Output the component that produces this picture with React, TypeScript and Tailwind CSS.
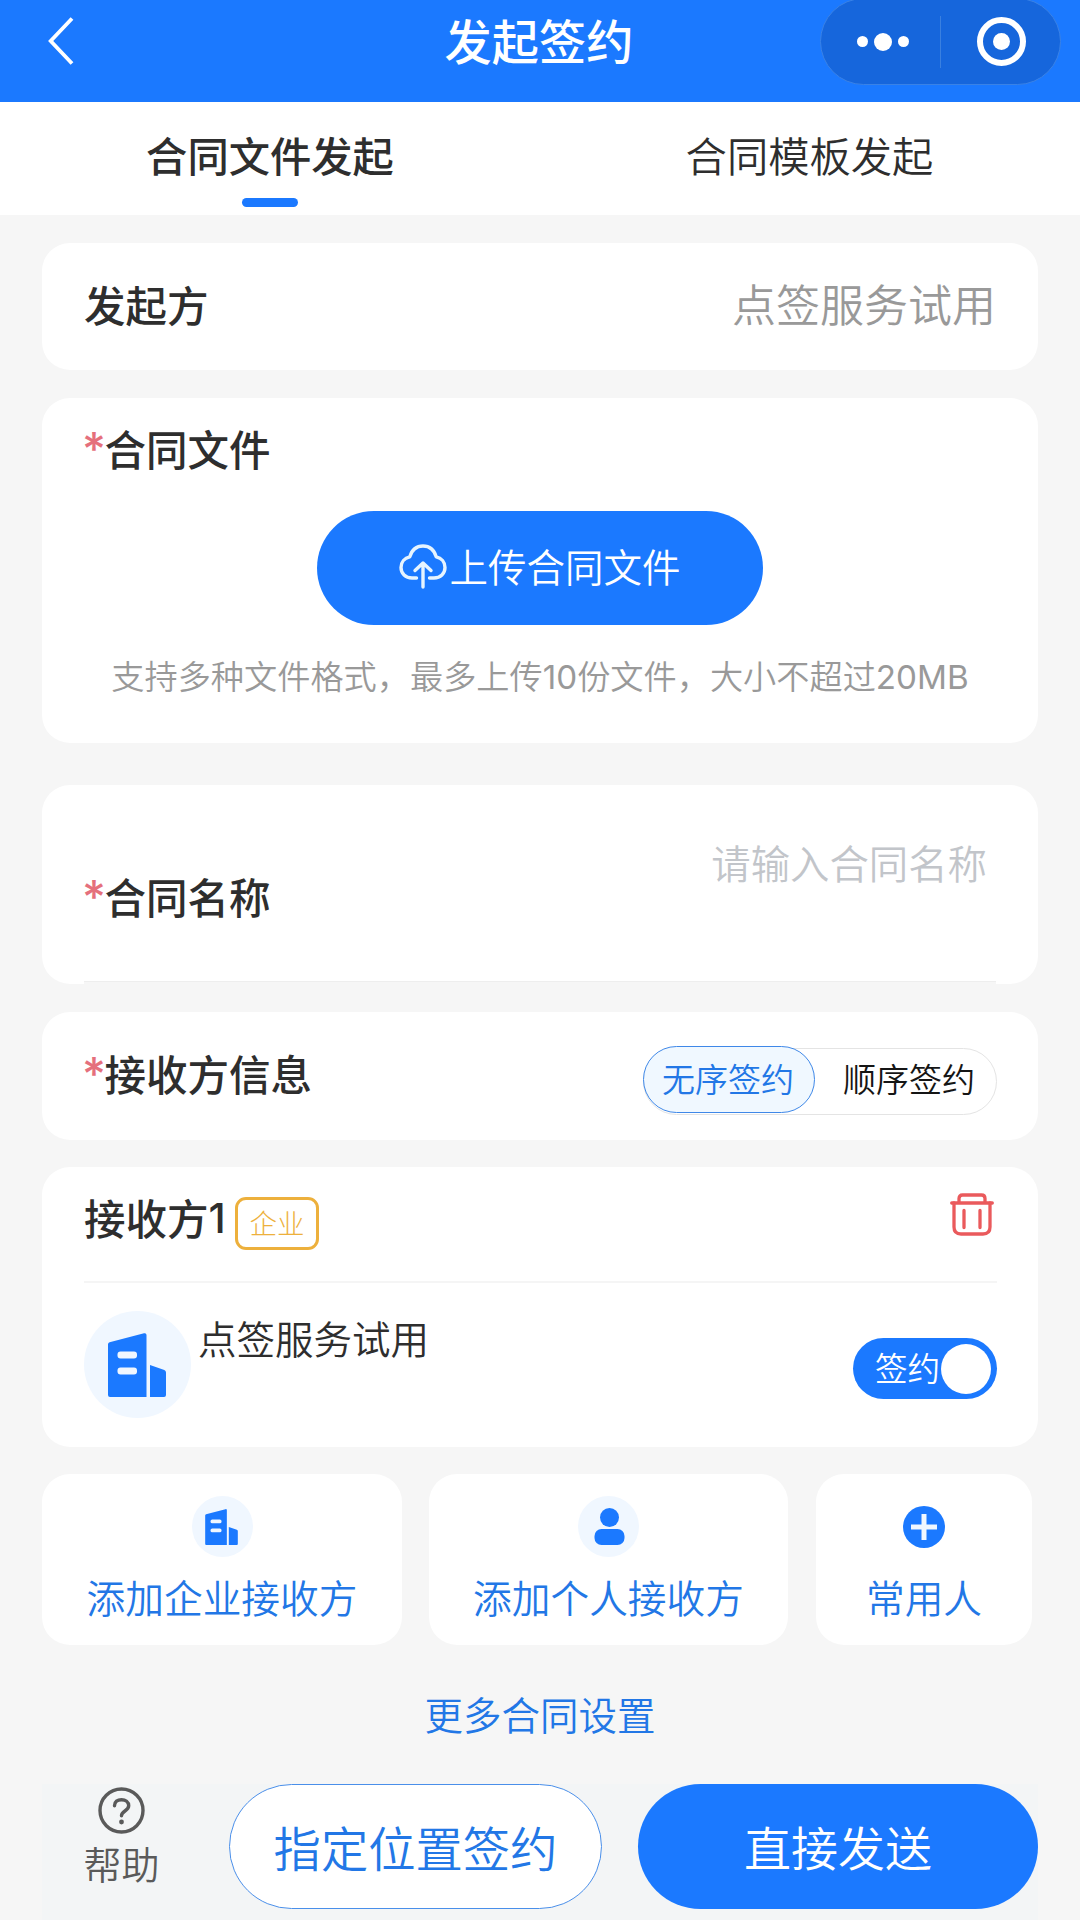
import React from "react";

function BackIcon() {
  return (
    <svg className="h-12 w-[26px]" viewBox="0 0 26 48" fill="none" stroke="#fff" strokeWidth="3.8">
      <path d="M24 1.5 2.700 24 24 46.500" />
    </svg>
  );
}

function CloudUploadIcon() {
  return (
    <svg className="h-[46px] w-12" viewBox="0 0 48 46" fill="none" stroke="#e6f4ff" strokeWidth="3.4" strokeLinecap="round" strokeLinejoin="round">
      <path d="M17.500 35H13C6.500 35 2 30.500 2 24.500c0-5.500 3.600-9.600 8.800-10.700C12.800 7 17.800 3 24 3s11.200 4 13.200 10.800C42.400 14.900 46 19 46 24.500c0 6-4.500 10.500-11 10.500h-4.500" />
      <path d="M24 44V20M16 27.500l8-7.500 8 7.500" />
    </svg>
  );
}

function BuildingIcon({ className }: { className: string }) {
  return (
    <svg className={className} viewBox="0 0 58 64">
      <path fill="#1b79ff" d="M0 11.500Q0 9.700 1.600 9.200L36 .3Q38.500-.2 38.500 2v62H2q-2 0-2-2zM42 32l14.300 5Q58 37.600 58 39.500V62q0 2-2 2H42z" />
      <rect x="9.500" y="18.500" width="19.500" height="7" rx="3" fill="#f0f7ff" />
      <rect x="9.500" y="34.500" width="19.500" height="7" rx="3" fill="#f0f7ff" />
    </svg>
  );
}

function PersonIcon() {
  return (
    <svg className="h-[37px] w-[31px]" viewBox="0 0 31 37" fill="#1b79ff">
      <circle cx="15.500" cy="9.500" r="9.500" />
      <rect x="0.500" y="21" width="30" height="16" rx="7" />
    </svg>
  );
}

function PlusIcon() {
  return (
    <svg className="size-[42px]" viewBox="0 0 42 42">
      <circle cx="21" cy="21" r="21" fill="#1b79ff" />
      <path d="M21 8v26M8 21h26" stroke="#f0f7ff" strokeWidth="5" />
    </svg>
  );
}

function TrashIcon() {
  return (
    <svg className="h-[43px] w-11" viewBox="0 0 44 43" fill="none" stroke="#ea5a5c" strokeWidth="3.3" strokeLinecap="round">
      <path d="M1.700 10h40.600M9 9.500V5.500Q9 2 12.500 2h19Q35 2 35 5.500v4" />
      <path d="M4 10v24q0 7 7 7h22q7 0 7-7V10M14 17.500v17M30 17.500v17" />
    </svg>
  );
}

function HelpIcon() {
  return (
    <svg className="size-[47px]" viewBox="0 0 47 47" fill="none" stroke="#5a5a5a" strokeWidth="3.400">
      <circle cx="23.500" cy="23.500" r="21.500" />
      <path d="M16.500 18.700c0-4 3-6 7-6s7.200 2.300 7.200 6c0 5.200-7.200 5.300-7.200 10" strokeLinecap="round" />
      <circle cx="23.500" cy="35" r="2.400" fill="#5a5a5a" stroke="none" />
    </svg>
  );
}

function Label({ children, required = false }: { children: React.ReactNode; required?: boolean }) {
  return (
    <div className="flex h-[60px] items-center text-[41.500px] leading-[60px] font-medium text-[#2e2e2e]">
      {required && <span className="-ml-[2px] h-[60px] w-[22.500px] pt-[1px] font-['Inter',sans-serif] text-[46px] text-[#e5707c]">*</span>}
      {children}
    </div>
  );
}

function Latin({ children }: { children: React.ReactNode }) {
  return <span className="font-['Inter',sans-serif] leading-none font-normal">{children}</span>;
}

function AddCard({ label, width, children }: { label: string; width: string; children: React.ReactNode }) {
  return (
    <button className={`flex h-[171px] flex-col items-center rounded-[28px] bg-white pt-[22px] ${width}`}>
      <span className="flex h-[61px] items-center">{children}</span>
      <span className="mt-[11px] text-[38.700px] leading-[56px] text-[#2277e6]">{label}</span>
    </button>
  );
}

export default function App() {
  return (
    <div className="flex h-[1920px] w-[1080px] flex-col overflow-hidden bg-[#f6f6f6] font-['Noto_Sans_CJK_SC',sans-serif] font-[350]">
      <header className="relative flex h-[102px] shrink-0 justify-center bg-[#1b79ff]">
        <button className="absolute top-[17px] left-[48px]"><BackIcon /></button>
        <h1 className="mt-[5px] -ml-[2px] text-[47.200px] leading-[70px] font-medium text-white">发起签约</h1>
        <div className="absolute -top-[2px] left-[820px] flex h-[87px] w-[241px] items-center rounded-full border border-[#3a82e6] bg-[#1666dc]">
          <div className="flex w-[119px] items-center justify-center gap-[6px] pl-[5px]">
            <i className="size-[11px] rounded-full bg-white" />
            <i className="size-[18px] rounded-full bg-white" />
            <i className="size-[11px] rounded-full bg-white" />
          </div>
          <i className="h-[52px] w-px bg-[#3a80e0]" />
          <div className="ml-[36px] flex size-[49px] items-center justify-center rounded-full border-[6px] border-white">
            <i className="size-[17px] rounded-full bg-white" />
          </div>
        </div>
      </header>

      <nav className="flex h-[113px] shrink-0 bg-white text-[41.300px] leading-[60px] text-[#2e2e2e]">
        <div className="flex w-1/2 flex-col items-center pt-[22px]">
          <span className="font-medium">合同文件发起</span>
          <i className="mt-[14px] h-[9px] w-[56px] rounded-full bg-[#1b79ff]" />
        </div>
        <div className="flex w-1/2 justify-center pt-[22px] pr-px">合同模板发起</div>
      </nav>

      <main className="ml-[42px] flex w-[996px] flex-col">
        <section className="mt-[28px] flex h-[127px] items-center justify-between rounded-[28px] bg-white pr-[42px] pb-[6px] pl-[42px]">
          <Label>发起方</Label>
          <span className="pb-[2px] text-[44px] leading-[60px] text-[#999]">点签服务试用</span>
        </section>

        <section className="mt-[28px] flex h-[345px] flex-col items-center rounded-[28px] bg-white pt-[20px]">
          <div className="w-full pl-[42px]"><Label required>合同文件</Label></div>
          <button className="mt-[33px] flex h-[114px] w-[446px] items-center justify-center rounded-full bg-[#1b79ff] pb-[4px] text-[38.500px] leading-[56px] text-white">
            <CloudUploadIcon />
            <span className="ml-[2px] pb-[2px]">上传合同文件</span>
          </button>
          <p className="mt-[25px] text-[33.200px] leading-[50px] whitespace-nowrap text-[#999]">支持多种文件格式，最多上传<Latin>10</Latin>份文件，大小不超过<Latin>20MB</Latin></p>
        </section>

        <section className="relative mt-[42px] flex h-[199px] items-start justify-between rounded-[28px] bg-white px-[42px]">
          <div className="pt-[81px]"><Label required>合同名称</Label></div>
          <span className="pt-[49px] pr-[9px] text-[39.400px] leading-[56px] text-[#c2c5ca]">请输入合同名称</span>
          <i className="absolute bottom-0 left-[42px] h-[3px] w-[912px] border-t border-[#eeeeee] bg-[#f6f6f6]" />
        </section>

        <section className="mt-[28px] flex h-[128px] items-start justify-between rounded-[28px] bg-white pr-[41px] pl-[42px]">
          <div className="pt-[31px]"><Label required>接收方信息</Label></div>
          <div className="mt-[36px] flex h-[67px] w-[354px] items-center rounded-full border-[1.500px] border-[#e4e4e4] text-[33px] leading-[48px]">
            <span className="-mt-[4px] -ml-[1px] flex h-[67px] w-[172px] items-center justify-center rounded-full border-[1.500px] border-[#3f88e8] bg-[#f0f8ff] pr-[2px] pb-[3px] text-[#2277e6]">无序签约</span>
            <span className="ml-[28px] pb-[8px] text-[#151515]">顺序签约</span>
          </div>
        </section>

        <section className="mt-[27px] flex h-[280px] flex-col rounded-[28px] bg-white pr-[41px] pl-[42px]">
          <div className="flex h-[116px] shrink-0 items-start border-b-2 border-[#f5f5f5]">
            <div className="w-[151px] pt-[20px]">
              <Label>接收方<span className="pt-[4px] font-['Inter',sans-serif] leading-none">1</span></Label>
            </div>
            <span className="mt-[30px] flex h-[53px] w-[84px] items-center justify-center rounded-[11px] border-[3px] border-[#edb03c] pb-[4px] text-[27.500px] leading-[40px] font-light text-[#edb03c]">企业</span>
            <button className="mt-[26px] mr-[3px] ml-auto"><TrashIcon /></button>
          </div>
          <div className="flex items-start pt-[28px]">
            <span className="flex size-[107px] items-center justify-center rounded-full bg-[#f0f7ff] pt-[1px] pr-[2px]"><BuildingIcon className="h-16 w-[58px]" /></span>
            <span className="-mt-[2px] ml-[7px] text-[38.500px] leading-[56px] text-[#2e2e2e]">点签服务试用</span>
            <span className="mt-[27px] ml-auto flex h-[61px] w-[144px] items-center rounded-full bg-[#1b79ff] pl-[22px] text-[32.500px] leading-[48px] text-white">
              <span className="pb-[4px]">签约</span>
              <i className="ml-px size-[50px] shrink-0 rounded-full bg-white" />
            </span>
          </div>
        </section>

        <div className="mt-[27px] flex">
          <AddCard label="添加企业接收方" width="w-[360px]">
            <span className="flex size-[61px] items-center justify-center rounded-full bg-[#f0f7ff] pr-[2px]"><BuildingIcon className="h-9 w-[33px]" /></span>
          </AddCard>
          <AddCard label="添加个人接收方" width="ml-[27px] w-[359px]">
            <span className="flex size-[61px] items-center justify-center rounded-full bg-[#f0f7ff] pl-[2px]"><PersonIcon /></span>
          </AddCard>
          <AddCard label="常用人" width="ml-[28px] w-[216px]"><PlusIcon /></AddCard>
        </div>

        <button className="mt-[40px] self-center text-[38.500px] leading-[56px] text-[#2277e6]">更多合同设置</button>

        <footer className="mt-[43px] flex h-[136px] items-start bg-[#f3f5f6]">
          <button className="ml-[41px] flex w-[77px] flex-col items-center pt-[3px] text-[38px] leading-[54px] text-[#5a5a5a]">
            <HelpIcon />
            <span className="mt-[2px]">帮助</span>
          </button>
          <button className="ml-[69px] flex h-[125px] w-[373px] items-center justify-center rounded-full border-[1.500px] border-[#4a8fea] bg-white text-[47.300px] leading-[70px] text-[#2277e6]">指定位置签约</button>
          <button className="ml-[36px] flex h-[125px] w-[400px] items-center justify-center rounded-full bg-[#1b79ff] pb-px text-[47px] leading-[70px] text-white">直接发送</button>
        </footer>
      </main>
    </div>
  );
}
